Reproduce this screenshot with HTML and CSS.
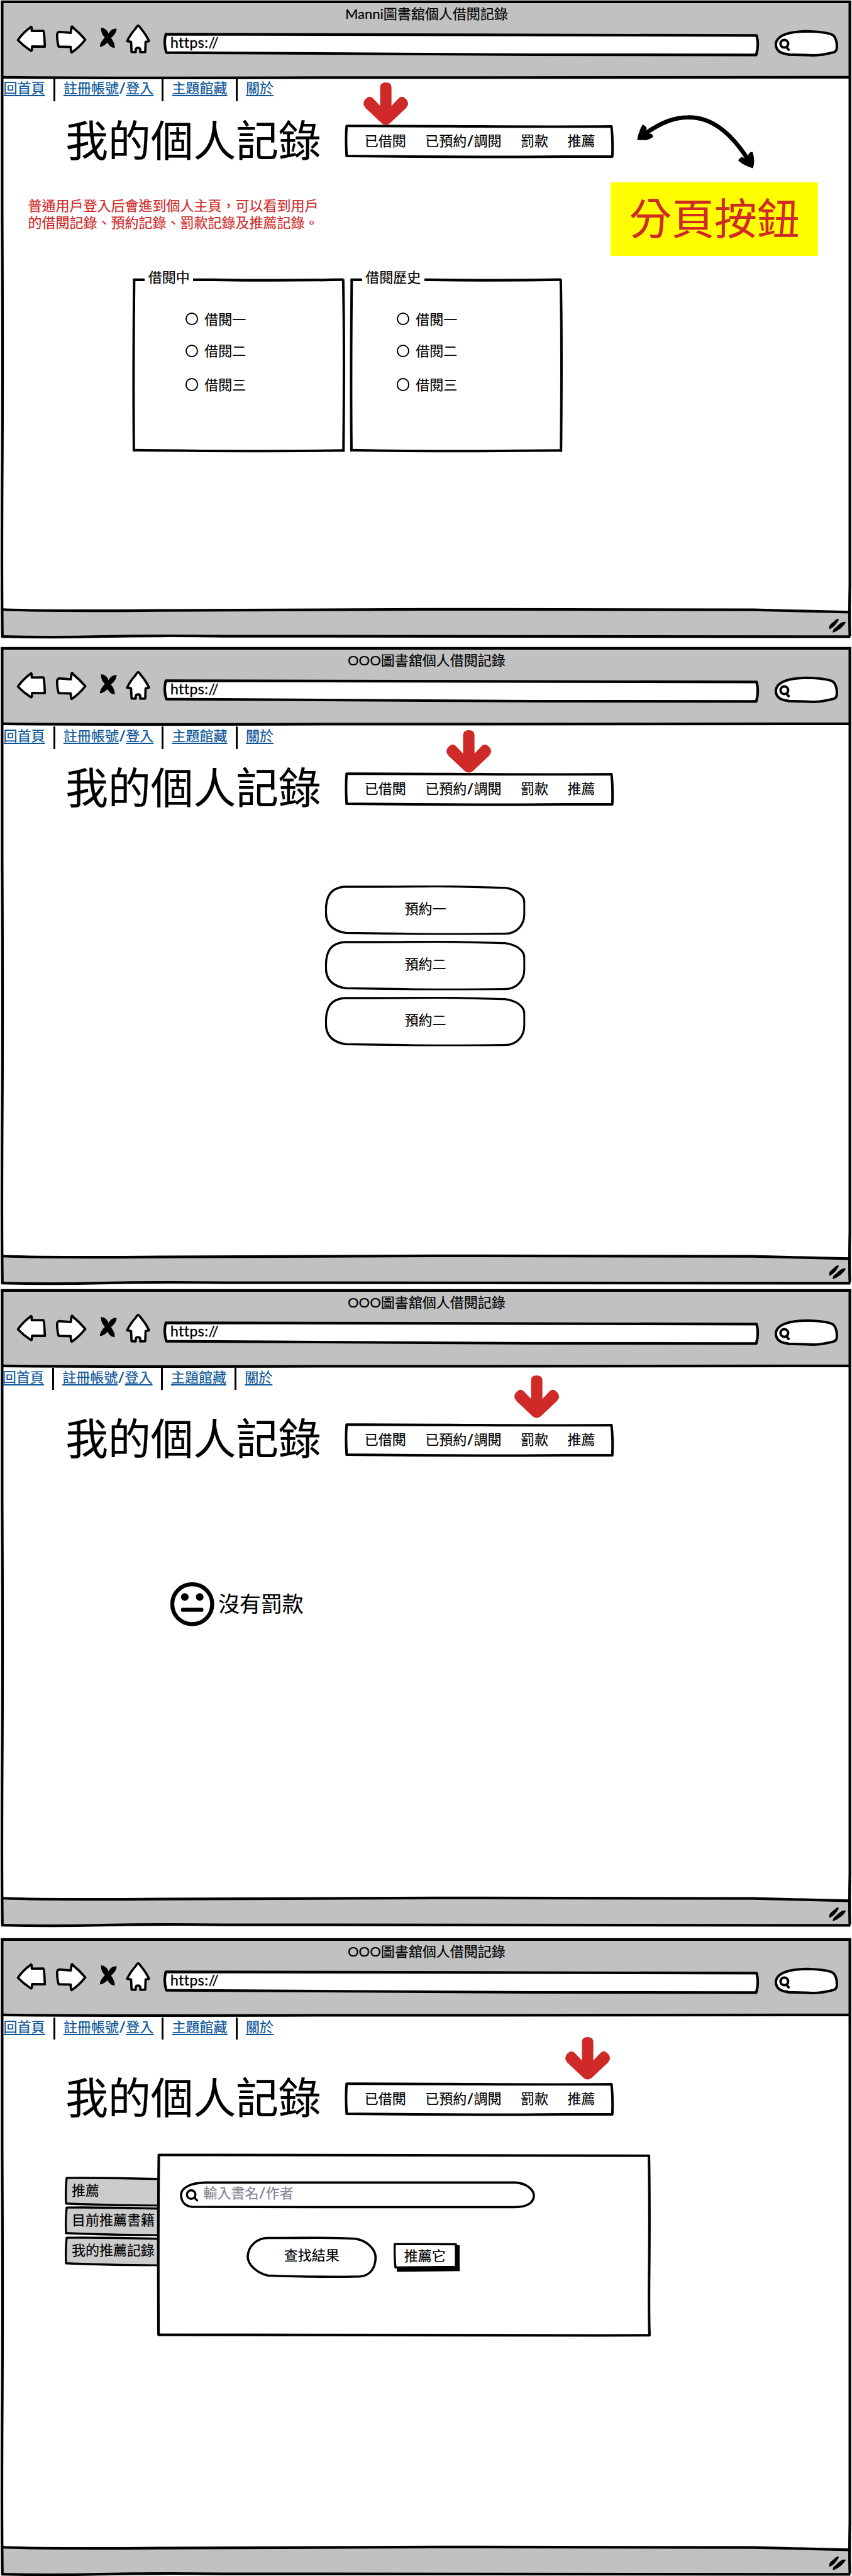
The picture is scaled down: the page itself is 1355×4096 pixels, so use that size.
FILE: index.html
```html
<!DOCTYPE html>
<html lang="zh-Hant">
<head>
<meta charset="utf-8">
<title>圖書館個人借閱記錄</title>
<link rel="stylesheet" href="styles.css">
</head>
<body>
<svg class="defs" aria-hidden="true">
  <symbol id="frame" viewBox="0 0 1600 1200">
    <path fill="#c1c1c1" d="M4 3.5H1596V145.6H4zM4 1144.5Q100 1148 300 1146C700 1143 1000 1144 1415 1145L1596 1149.5V1195.5H4z"/>
    <g fill="none" stroke="#000" stroke-width="5">
      <path d="M1.5 3.4H1598.5"/>
      <path d="M4 3V400Q5.5 700 4 900Q3 1100 4.5 1196"/>
      <path d="M1596 3V1100Q1594.800 1160 1596 1194"/>
      <path d="M4 145Q200 146.800 600 145.800T1596 145"/>
      <path d="M4 1144.500Q100 1148 300 1146C700 1143 1000 1144 1415 1145L1596 1149.500"/>
      <path d="M2.500 1195Q90 1197.500 190 1195.200Q300 1192.800 420 1194.500C700 1197 1000 1196.300 1597 1195.500"/>
    </g>
    <g transform="translate(1080 1102) scale(.3333)">
      <path d="M1470 184Q1482 176 1486 184Q1465 225 1434 238Q1426 224 1440 210zM1453 258Q1448 240 1470 228Q1502 190 1526 198Q1505 236 1453 258z"/>
    </g>
  </symbol>
  <symbol id="nav-icons" viewBox="90 45 765 175">
    <g fill="#fff" stroke="#000" stroke-width="13" stroke-linejoin="round">
      <path d="M102 136Q130 95 176 62Q180 58 180 85L246 84Q250 84 254 173L182 172L180 194Q178 200 172 194Q135 170 102 136z"/>
      <path d="M323 112Q322 92 334 90L400 95L405 62Q409 56 414 67Q450 96 482 134Q445 180 405 206Q399 204 400 175L332 173Q324 150 323 112z"/>
      <path d="M780 55Q785 55 797 73Q826 108 841 142L822 146L820 203L792 204V190Q790 180 780 180Q768 180 766 190V204L743 203L740 146L718 142Q735 105 765 72Q775 55 780 55z"/>
    </g>
    <path d="M570 66Q602 68 613 100Q630 68 659 72Q658 100 627 124Q650 155 648 181Q620 178 607 150Q590 172 564 174Q564 150 592 122Q570 100 570 66z"/>
  </symbol>
  <symbol id="url" viewBox="306 60 1120 46">
    <path fill="#fff" stroke="#000" stroke-width="4.900" stroke-linejoin="round" d="M311.500 64C600 62.300 900 63 1421 66.300Q1426 84 1420.300 103L1000 102.500Q700 101.500 312.500 98.500Q307 82 311.500 64z"/>
  </symbol>
  <symbol id="search-pill" viewBox="822 78 364 156">
    <path fill="#fff" stroke="#000" stroke-width="14" d="M904 217Q832 214 832 158Q842 90 1010 88Q1140 92 1160 115Q1178 140 1176 180Q1175 200 1158 206Q1090 224 1040 223Q970 220 895 219"/>
    <g fill="none" stroke="#000" stroke-width="14" stroke-linecap="round"><circle cx="880" cy="158" r="21.500"/><path d="M893 178L904 191"/></g>
  </symbol>
  <symbol id="tabbox" viewBox="646 232 508 67">
    <path fill="#fff" stroke="#000" stroke-width="4.700" stroke-linejoin="round" d="M651 237C800 236.500 950 239.500 1148.500 238Q1151.500 265 1150 294.500L1060 294.500C950 295.500 850 296 651 293.500Q649 260 651 237z"/>
  </symbol>
  <symbol id="arrow" viewBox="0 0 84 80">
    <path fill="#cf2a27" d="M31.300 9Q31.300 0 42 0Q52.700 0 52.700 9V44L66.500 29.500Q72.500 24.500 78 29.500Q83.500 33 84 41Q82 47 76 52L50 76.500Q42 83.500 34 76.500L8 52Q2 47 0 41Q.5 33 6 29.500Q11.500 24.500 17.500 29.500L31.300 44z"/>
  </symbol>
  <symbol id="pill" viewBox="152 128 1128 278">
    <path fill="#fff" stroke="#000" stroke-width="12" d="M268 135C500 136 700 133 780 133C900 133 1050 138 1165 141C1235 150 1275 185 1275 225V290C1273 350 1235 398 1165 400C900 403 700 403 600 400L268 395C200 384 158 350 157 285C154 200 175 138 268 135z"/>
  </symbol>
  <symbol id="panel" viewBox="248 506 401 346">
    <g fill="none" stroke="#000" stroke-width="5">
      <path d="M249.500 525.800H400Q520 528 645 525.700"/>
      <path stroke-width="4.700" d="M252 526Q250 700 251.500 848M644.500 525Q647 640 645 849"/>
      <path stroke-width="4.700" d="M249.500 845.700C350 847.500 450 848.500 646.500 846.500"/>
    </g>
  </symbol>
  <symbol id="side" viewBox="0 0 176 56">
    <path fill="#ccc" stroke="#000" stroke-width="4" stroke-linejoin="round" d="M3.500 2.500Q90 2 176 4.500V54.500Q80 54 2.500 50.500Q1 28 3.500 2.500z"/>
  </symbol>
</svg>

<section class="window">
  <svg class="frame"><use href="#frame"/></svg>
  <div class="content">
    <header class="chrome">
      <div class="title">Manni圖書舘個人借閱記錄</div>
      <div class="toolbar">
        <svg class="nav-icons"><use href="#nav-icons"/></svg>
        <div class="url"><svg><use href="#url"/></svg><span>https://</span></div>
        <svg class="search-pill"><use href="#search-pill"/></svg>
      </div>
    </header>
    <nav class="links"><a>回首頁</a><i></i><a>註冊帳號<b>/</b>登入</a><i></i><a>主題館藏</a><i></i><a>關於</a></nav>
    <div class="head">
      <h1>我的個人記錄</h1>
      <div class="tabs"><svg><use href="#tabbox"/></svg><div class="tab-list"><span>已借閱</span><span>已預約<b>/</b>調閱</span><span>罰款</span><span>推薦</span></div></div>
    </div>
    <div class="notes">
      <p class="remark">普通用戶登入后會進到個人主頁，可以看到用戶的借閱記錄、預約記錄、罰款記錄及推薦記錄。</p>
      <div class="sticker">分頁按鈕</div>
    </div>
    <div class="groups">
      <div class="group">
        <svg class="box"><use href="#panel"/></svg>
        <div class="legend">借閱中</div>
        <ul><li><span class="radio"></span>借閱一</li><li><span class="radio"></span>借閱二</li><li><span class="radio"></span>借閱三</li></ul>
      </div>
      <div class="group group-history">
        <svg class="box"><use href="#panel"/></svg>
        <div class="legend">借閱歷史</div>
        <ul><li><span class="radio"></span>借閱一</li><li><span class="radio"></span>借閱二</li><li><span class="radio"></span>借閱三</li></ul>
      </div>
    </div>
    <svg class="arrow arrow-borrowed"><use href="#arrow"/></svg>
    <svg class="curve" viewBox="40 550 680 320">
      <path fill="none" stroke="#000" stroke-width="24" d="M92 662C190 595 260 570 335 570C480 566 590 680 668 800"/>
      <path d="M48 696Q58 645 78 611Q90 612 102 629L98 650L118 662Q136 660 138 681Q115 695 98 699zM617 812Q632 792 640 794L658 800L674 790Q672 766 698 764Q708 790 707 818Q706 845 699 856Q645 840 617 812z"/>
    </svg>
  </div>
</section>

<section class="window window-reserve">
  <svg class="frame"><use href="#frame"/></svg>
  <div class="content">
    <header class="chrome">
      <div class="title">OOO圖書舘個人借閱記錄</div>
      <div class="toolbar">
        <svg class="nav-icons"><use href="#nav-icons"/></svg>
        <div class="url"><svg><use href="#url"/></svg><span>https://</span></div>
        <svg class="search-pill"><use href="#search-pill"/></svg>
      </div>
    </header>
    <nav class="links"><a>回首頁</a><i></i><a>註冊帳號<b>/</b>登入</a><i></i><a>主題館藏</a><i></i><a>關於</a></nav>
    <div class="head">
      <h1>我的個人記錄</h1>
      <div class="tabs"><svg><use href="#tabbox"/></svg><div class="tab-list"><span>已借閱</span><span>已預約<b>/</b>調閱</span><span>罰款</span><span>推薦</span></div></div>
    </div>
    <div class="reservations">
      <div class="pill"><svg><use href="#pill"/></svg><span>預約一</span></div>
      <div class="pill"><svg><use href="#pill"/></svg><span>預約二</span></div>
      <div class="pill"><svg><use href="#pill"/></svg><span>預約二</span></div>
    </div>
    <svg class="arrow arrow-reserved"><use href="#arrow"/></svg>
  </div>
</section>

<section class="window window-fine">
  <svg class="frame"><use href="#frame"/></svg>
  <div class="content">
    <header class="chrome">
      <div class="title">OOO圖書舘個人借閱記錄</div>
      <div class="toolbar">
        <svg class="nav-icons"><use href="#nav-icons"/></svg>
        <div class="url"><svg><use href="#url"/></svg><span>https://</span></div>
        <svg class="search-pill"><use href="#search-pill"/></svg>
      </div>
    </header>
    <nav class="links"><a>回首頁</a><i></i><a>註冊帳號<b>/</b>登入</a><i></i><a>主題館藏</a><i></i><a>關於</a></nav>
    <div class="head">
      <h1>我的個人記錄</h1>
      <div class="tabs"><svg><use href="#tabbox"/></svg><div class="tab-list"><span>已借閱</span><span>已預約<b>/</b>調閱</span><span>罰款</span><span>推薦</span></div></div>
    </div>
    <div class="empty">
      <svg class="face" viewBox="0 0 82 82">
        <circle cx="41" cy="41" r="37.500" fill="none" stroke="#000" stroke-width="7.500"/>
        <circle cx="27" cy="27.500" r="7.200"/><circle cx="55" cy="27.500" r="7.200"/>
        <rect x="20" y="47.800" width="42" height="7.400" rx="3"/>
      </svg>
      <span>沒有罰款</span>
    </div>
    <svg class="arrow arrow-fine"><use href="#arrow"/></svg>
  </div>
</section>

<section class="window window-recommend">
  <svg class="frame"><use href="#frame"/></svg>
  <div class="content">
    <header class="chrome">
      <div class="title">OOO圖書舘個人借閱記錄</div>
      <div class="toolbar">
        <svg class="nav-icons"><use href="#nav-icons"/></svg>
        <div class="url"><svg><use href="#url"/></svg><span>https://</span></div>
        <svg class="search-pill"><use href="#search-pill"/></svg>
      </div>
    </header>
    <nav class="links"><a>回首頁</a><i></i><a>註冊帳號<b>/</b>登入</a><i></i><a>主題館藏</a><i></i><a>關於</a></nav>
    <div class="head">
      <h1>我的個人記錄</h1>
      <div class="tabs"><svg><use href="#tabbox"/></svg><div class="tab-list"><span>已借閱</span><span>已預約<b>/</b>調閱</span><span>罰款</span><span>推薦</span></div></div>
    </div>
    <div class="recommend">
      <div class="side-tabs">
        <div class="side"><svg><use href="#side"/></svg><span>推薦</span></div>
        <div class="side"><svg><use href="#side"/></svg><span>目前推薦書籍</span></div>
        <div class="side"><svg><use href="#side"/></svg><span>我的推薦記錄</span></div>
      </div>
      <div class="pane">
        <svg class="pane-box" viewBox="295 405 927 345">
          <path fill="#fff" stroke="#000" stroke-width="4.800" stroke-linejoin="round" d="M298 408C600 407.500 900 408 1218.500 409.500Q1220 500 1219 620Q1218 700 1219.500 746.500C950 747.500 700 747 297.500 745.500Q296.500 560 298 408z"/>
        </svg>
        <div class="pane-body">
          <div class="search">
            <svg viewBox="338 457 667 52">
              <path fill="#fff" stroke="#000" stroke-width="4.200" d="M387 459.800H968C990 461 1003 474 1003 485C1002 497 993 505.500 968 506H600L361 505.500C347 504 340.300 495 340.300 482C341 470 358 460 387 459.800z"/>
              <g fill="none" stroke="#000" stroke-width="4" stroke-linecap="round"><circle cx="359.300" cy="482.500" r="8"/><path d="M365.500 488.500L370.500 493.500"/></g>
            </svg>
            <span>輸入書名<b>/</b>作者</span>
          </div>
          <div class="actions">
            <div class="result">
              <svg viewBox="462 560 245 78"><path fill="#fff" stroke="#000" stroke-width="4.200" d="M502 563C560 563.500 620 561 666 564.500C690 568 704.500 585 704.500 600C704 620 694 634 675 635.200Q600 637 502 633.500C480 628 464.300 612 464.300 598C465 578 482 563 502 563z"/></svg>
              <span>查找結果</span>
            </div>
            <div class="push">
              <svg viewBox="738 572 125 55"><path d="M856 576L862 577V625.500L744 626.500V618L856 616z"/><path fill="#fff" stroke="#000" stroke-width="4" stroke-linejoin="round" d="M740 574.500L855 575V617.500L741.500 618.500Q739.500 600 740 574.500z"/></svg>
              <span>推薦它</span>
            </div>
          </div>
        </div>
      </div>
    </div>
    <svg class="arrow arrow-recommend"><use href="#arrow"/></svg>
  </div>
</section>
</body>
</html>
```
FILE: styles.css
```css
/* 1rem = ten drawing units */
html {
  font-size: 8.46875px;
}

body {
  margin: 0;
  background: #fff;
  color: #000;
  font-family: Lato, "Noto Sans CJK TC", sans-serif;
  overflow: hidden;
}

.defs {
  display: none;
}

svg {
  display: block;
  overflow: visible;
}

/* Window shell */
.window {
  display: grid;
  width: 160rem;
  height: 120rem;
  font-size: 2.6rem;
  line-height: 3.2rem;
  -webkit-text-stroke: 0.2px;
}

.window > * {
  grid-area: 1 / 1;
}

.window-reserve {
  margin-top: 1.4rem;
}

.window-fine {
  margin-top: 0.6rem;
}

.window-recommend {
  margin-top: 1.8rem;
}

.frame {
  width: 160rem;
  height: 120rem;
}

.content {
  position: relative;
  display: flex;
  flex-direction: column;
}

.chrome {
  height: 14.8rem;
  box-sizing: border-box;
  padding-top: 0.95rem;
}

.title {
  text-align: center;
  padding-left: 0.2rem;
}

.toolbar {
  display: flex;
  align-items: flex-start;
  margin-top: 0.15rem;
  padding-left: 3rem;
}

.nav-icons {
  flex: none;
  width: 25.5rem;
  height: 5.83rem;
  margin-top: 0.2rem;
}

.url {
  display: grid;
  flex: none;
  width: 112rem;
  height: 4.6rem;
  margin: 1.7rem 0 0 2.1rem;
}

.url > *,
.tabs > *,
.group > *,
.pill > *,
.side > *,
.pane > *,
.search > *,
.result > *,
.push > * {
  grid-area: 1 / 1;
}

.url svg {
  width: 112rem;
  height: 4.6rem;
}

.url span {
  padding-left: 1.4rem;
  font-size: 2.7rem;
  letter-spacing: 0.06rem;
  line-height: 3.9rem;
  -webkit-text-stroke: 0.4px;
}

.search-pill {
  flex: none;
  width: 12.13rem;
  height: 5.2rem;
  margin: 1.3rem 0 0 2.8rem;
}

/* Link bar */
.links {
  display: flex;
  gap: 1.56rem;
  height: 4.2rem;
  padding-left: 0.65rem;
  line-height: 3.65rem;
}

.links a {
  color: #0b5599;
  text-decoration: underline;
  text-decoration-thickness: 0.18rem;
  text-underline-offset: 0.35rem;
  text-decoration-skip-ink: none;
}

.links i {
  width: 0.35rem;
  background: #000;
  border-radius: 0.1rem;
}

b {
  display: inline-block;
  width: 1.34rem;
  text-align: center;
  font-weight: 700;
}

.window-reserve .links,
.window-recommend .links {
  margin-top: 0.2rem;
}

.window-fine .links {
  padding-left: 0.45rem;
}

/* Heading and tab strip */
.head {
  display: flex;
  align-items: flex-start;
  height: 8rem;
  margin-top: 3.4rem;
  padding-left: 12.3rem;
}

.window-fine .head {
  margin-top: 5.2rem;
}

.window-recommend .head {
  margin-top: 6.9rem;
}

h1 {
  margin: 0;
  width: 48rem;
  font-size: 8rem;
  font-weight: 400;
  line-height: 7.9rem;
  white-space: nowrap;
}

.tabs {
  display: grid;
  width: 50.8rem;
  height: 6.7rem;
  margin: 0.8rem 0 0 4.3rem;
}

.tabs svg {
  width: 50.8rem;
  height: 6.7rem;
}

.tab-list {
  display: flex;
  gap: 3.6rem;
  padding-left: 3.85rem;
  line-height: 6.5rem;
}

/* Annotations */
.arrow {
  position: absolute;
  width: 8.4rem;
  height: 8rem;
}

.arrow-borrowed {
  left: 68.2rem;
  top: 15.5rem;
}

.arrow-reserved {
  left: 83.8rem;
  top: 15.7rem;
}

.arrow-fine {
  left: 96.6rem;
  top: 16.3rem;
}

.arrow-recommend {
  left: 106.2rem;
  top: 18.7rem;
}

.curve {
  position: absolute;
  left: 119.33rem;
  top: 21.33rem;
  width: 22.67rem;
  height: 10.67rem;
}

.notes {
  display: flex;
  justify-content: space-between;
  align-items: flex-start;
  margin-top: 3.8rem;
  padding: 0 6.4rem 0 5.25rem;
}

.remark {
  width: 54.8rem;
  margin: 2.8rem 0 0;
  color: #cf2a27;
}

.sticker {
  width: 38.9rem;
  height: 13.9rem;
  background: #ff0;
  color: #cf2a27;
  font-size: 8rem;
  line-height: 13.5rem;
  text-align: center;
}

/* Borrowing groups */
.groups {
  display: flex;
  gap: 0.7rem;
  margin-top: 2.5rem;
  padding-left: 24.8rem;
}

.group {
  display: grid;
  width: 40.1rem;
  height: 34.6rem;
}

.box {
  width: 40.1rem;
  height: 34.6rem;
}

.legend {
  place-self: start;
  margin-left: 2.4rem;
  padding: 0 0.65rem;
  background: #fff;
  line-height: 3.1rem;
}

.group ul {
  margin: 0;
  padding: 7.7rem 0 0 10rem;
  list-style: none;
}

.group-history ul {
  padding-left: 8.9rem;
}

.group li {
  display: flex;
  align-items: center;
  gap: 1.2rem;
  margin-bottom: 2.8rem;
}

.group li:nth-child(2) {
  margin-bottom: 3.1rem;
}

.radio {
  width: 2.4rem;
  height: 2.4rem;
  box-sizing: border-box;
  border: 2px solid #000;
  border-radius: 50%;
}

/* Reservations */
.reservations {
  display: flex;
  flex-direction: column;
  gap: 1.14rem;
  margin-top: 14.27rem;
  padding-left: 61.07rem;
}

.pill {
  display: grid;
  width: 37.6rem;
  height: 9.27rem;
}

.pill:last-child {
  margin-top: 0.1rem;
}

.pill svg {
  width: 37.6rem;
  height: 9.27rem;
}

.pill span {
  line-height: 8.7rem;
  text-align: center;
}

/* No fines */
.empty {
  display: flex;
  align-items: center;
  gap: 0.8rem;
  margin-top: 22.93rem;
  padding-left: 32rem;
  font-size: 4rem;
}

.face {
  width: 8.2rem;
  height: 8.2rem;
}

/* Recommendations */
.recommend {
  display: flex;
  align-items: flex-start;
  margin-top: 6.45rem;
  padding-left: 12.2rem;
}

.side-tabs {
  width: 17.3rem;
  margin-top: 4.3rem;
}

.side {
  display: grid;
  height: 5.6rem;
}

.side svg {
  width: 17.6rem;
  height: 5.6rem;
}

.side span {
  padding-left: 1.25rem;
  line-height: 5.2rem;
  white-space: nowrap;
}

.pane {
  display: grid;
  width: 92.7rem;
  height: 34.5rem;
}

.pane-box {
  width: 92.7rem;
  height: 34.5rem;
}

.pane-body {
  padding: 5.2rem 0 0 4.3rem;
}

.search {
  display: grid;
  width: 66.7rem;
  height: 5.2rem;
}

.search svg {
  width: 66.7rem;
  height: 5.2rem;
}

.search span {
  padding-left: 4.4rem;
  color: #84848f;
  line-height: 4.6rem;
}

.actions {
  display: flex;
  align-items: flex-start;
  gap: 3.1rem;
  margin-top: 5.1rem;
  padding-left: 12.5rem;
}

.result {
  display: grid;
  width: 24.5rem;
  height: 7.8rem;
}

.result svg {
  width: 24.5rem;
  height: 7.8rem;
}

.result span {
  line-height: 7.2rem;
  text-align: center;
}

.push {
  display: grid;
  width: 12.5rem;
  height: 5.5rem;
  margin-top: 1.2rem;
}

.push svg {
  width: 12.5rem;
  height: 5.5rem;
}

.push span {
  padding-left: 2rem;
  line-height: 4.9rem;
}
```
